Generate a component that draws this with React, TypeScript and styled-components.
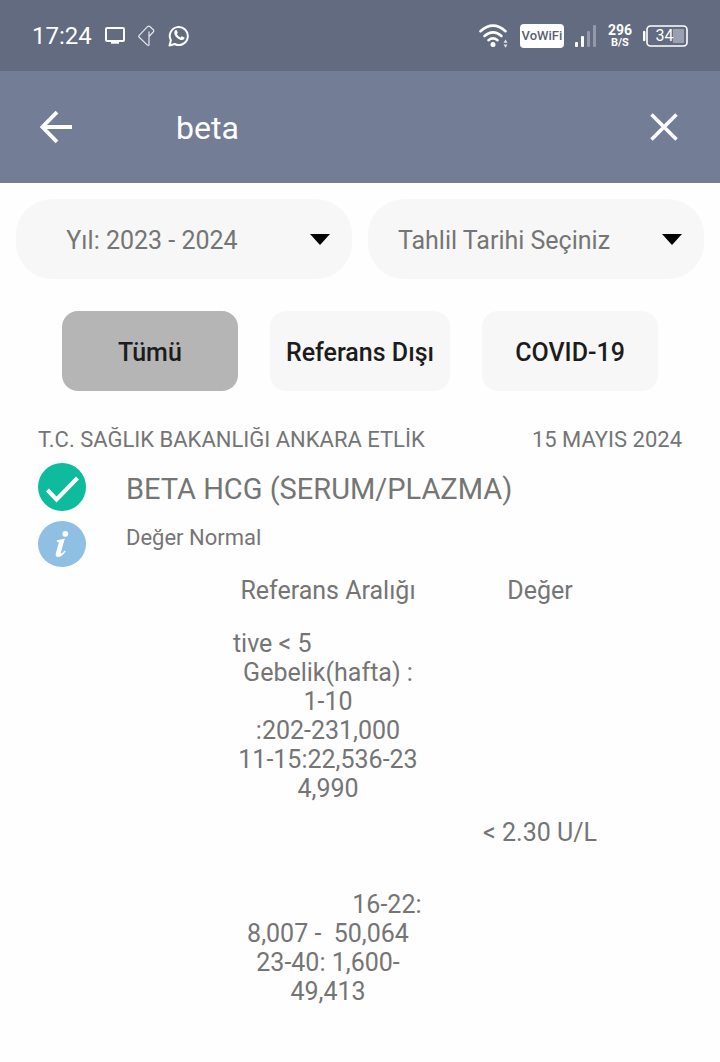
import React from 'react';
import styled, { createGlobalStyle } from 'styled-components';

const GlobalStyle = createGlobalStyle`
  *, *::before, *::after { box-sizing: border-box; }
  body {
    margin: 0;
    background: #fefefe;
    color: #757575;
    font-family: Roboto, "Liberation Sans", sans-serif;
  }
  button, input, select { font: inherit; }
`;

const StatusBar = styled.div`
  display: flex;
  align-items: center;
  justify-content: space-between;
  height: 71px;
  padding: 0 32px;
  background: #636b80;
  color: #ffffff;
`;

const StatusGroup = styled.div<{ $gap: number }>`
  display: flex;
  align-items: center;
  gap: ${(p) => p.$gap}px;
`;

const Clock = styled.span`
  font-size: 24px;
  line-height: 28px;
`;

const VoWifi = styled.span`
  width: 44px;
  height: 24px;
  border-radius: 4px;
  background: #ffffff;
  color: #5a6175;
  font-size: 13px;
  font-weight: 500;
  line-height: 24px;
  text-align: center;
`;

const Speed = styled.span`
  display: flex;
  flex-direction: column;
  align-items: center;
  font-size: 14px;
  font-weight: 700;
  line-height: 13px;

  small {
    font-size: 11px;
    line-height: 11px;
  }
`;

const Battery = styled.span`
  position: relative;
  display: flex;
  width: 45px;
  height: 22px;
`;

const BatteryLevel = styled.span`
  position: absolute;
  inset: 0 6px 0 4px;
  font-size: 16px;
  line-height: 22px;
  text-align: center;
`;

const SearchBar = styled.form`
  display: flex;
  align-items: center;
  height: 112px;
  padding: 0 32px;
  background: #737d96;
`;

const IconButton = styled.button`
  display: flex;
  align-items: center;
  justify-content: center;
  flex: none;
  width: 48px;
  height: 48px;
  padding: 0;
  border: 0;
  background: transparent;
  color: #ffffff;
`;

const SearchInput = styled.input`
  flex: 1;
  min-width: 0;
  height: 64px;
  margin-left: 96px;
  padding: 2px 0 0;
  border: 0;
  outline: 0;
  background: transparent;
  color: #ffffff;
  font-size: 32px;
`;

const Selects = styled.div`
  display: grid;
  grid-template-columns: 1fr 1fr;
  gap: 16px;
  padding: 16px;
`;

const SelectBox = styled.div`
  display: grid;
  grid-template-areas: "field";
  align-items: center;
  height: 80px;
  border-radius: 36px;
  background: #f7f7f7;

  svg {
    grid-area: field;
    justify-self: end;
    margin-right: 22px;
    pointer-events: none;
  }
`;

const Select = styled.select`
  grid-area: field;
  width: 100%;
  height: 80px;
  padding: 2px 64px 0 0;
  border: 0;
  border-radius: 36px;
  appearance: none;
  background: transparent;
  color: #757575;
  font-size: 25px;
  text-align: center;
  text-align-last: center;
`;

const Filters = styled.div`
  display: flex;
  justify-content: center;
  gap: 32px;
  padding: 16px;
`;

const FilterButton = styled.button<{ $active?: boolean }>`
  min-width: 176px;
  height: 80px;
  padding: 3px 16px 0;
  border: 0;
  border-radius: 16px;
  background: ${(p) => (p.$active ? '#b5b5b5' : '#f7f7f7')};
  color: #1c1c1c;
  font-size: 25px;
  font-weight: 500;
  white-space: nowrap;
`;

const Result = styled.article`
  padding: 20px 38px;
`;

const ResultMeta = styled.header`
  display: flex;
  justify-content: space-between;
  margin-bottom: 10px;
  font-size: 22px;
  line-height: 26px;
`;

const ResultRow = styled.div`
  display: flex;
  align-items: flex-start;
  gap: 40px;
  margin-bottom: 6px;

  svg { flex: none; }
`;

const ResultTitle = styled.h1`
  margin: 0;
  font-size: 29px;
  font-weight: 400;
  line-height: 52px;
`;

const ResultStatus = styled.p`
  margin: 0;
  font-size: 22px;
  line-height: 34px;
`;

const ValueTable = styled.table`
  width: 424px;
  margin: 7px auto 0 184px;
  border-collapse: collapse;
  table-layout: fixed;
  font-size: 25px;
  line-height: 29px;

  th, td {
    width: 50%;
    padding: 0;
    font-weight: 400;
    text-align: center;
    vertical-align: middle;
  }

  th { height: 55px; padding-bottom: 23px; }
`;

const RangeCell = styled.td`
  white-space: pre;
`;

const space = (count: number) => '\u00a0'.repeat(count);

const rangeLines = [
  'tive < 5' + space(18),
  'Gebelik(hafta) :',
  '1-10',
  ':202-231,000',
  '11-15:22,536-23',
  '4,990',
  space(1),
  space(1),
  space(1),
  space(19) + '16-22:',
  '8,007 -\u00a0 50,064',
  '23-40: 1,600-',
  '49,413',
  space(1),
];

const CastIcon = () => (
  <svg width="20" height="17" viewBox="0 0 20 17" fill="none" aria-hidden="true">
    <rect x="1" y="1" width="18" height="13" rx="1" stroke="#fff" strokeWidth="2" />
    <path d="M6 15.5h8" stroke="#fff" strokeWidth="2.4" />
  </svg>
);

const DiamondIcon = () => (
  <svg width="17" height="22" viewBox="0 0 17 22" fill="none" stroke="#e4e6ec" strokeWidth="1.2" strokeLinejoin="round" aria-hidden="true">
    <path d="M11 6.500V19.500q0 1.600-1.600.6L1.200 12.300q-.9-1 0-2L9.500 1.700q1.300-1.200 2.600 0l3.200 3q1 1.200 0 2.300L11 11.500" />
  </svg>
);

const WhatsAppIcon = () => (
  <svg width="22" height="23" viewBox="0 0 22 23" fill="none" aria-hidden="true">
    <path d="M1.500 21.500l1.400-5.200A9 9 0 1 1 6.700 20z" stroke="#fff" strokeWidth="2" strokeLinejoin="round" />
    <path d="M7.300 6.300c.6-.6 1.300-.5 1.600.2l.8 1.900c.1.400-.1.800-.8 1.600.9 1.700 2 2.700 3.700 3.400.9-1.200 1.200-1.300 1.700-1l1.800.9c.6.300.5 1.200 0 1.800-.9 1.100-2.400 1.300-4.100.6-2.700-1-4.400-2.900-5.400-5.200-.6-1.600-.3-3.200.7-4.200z" fill="#fff" />
  </svg>
);

const WifiIcon = () => (
  <svg width="30" height="24" viewBox="0 0 30 24" fill="none" aria-hidden="true">
    <g stroke="#fff" strokeWidth="2.600" strokeLinecap="round">
      <path d="M1.500 7.200Q14 -3.800 26.500 7.200" />
      <path d="M5.500 12Q14 4.700 22.500 12" />
      <path d="M9.500 16.200Q14 12.600 18.500 16.200" />
    </g>
    <circle cx="14" cy="20.500" r="2.500" fill="#fff" />
    <path d="M24.500 18.800l2-3.200 2 3.200zM24.500 20.600l2 3.200 2-3.200z" fill="#e1e3e9" />
  </svg>
);

const SignalIcon = () => (
  <svg width="22" height="22" viewBox="0 0 22 22" aria-hidden="true">
    <rect x="0" y="17" width="3" height="5" rx="1" fill="#fff" />
    <rect x="6" y="11" width="3" height="11" rx="1" fill="#fff" />
    <rect x="12" y="6" width="3" height="16" rx="1" fill="#9399aa" />
    <rect x="18" y="0" width="3" height="22" rx="1" fill="#9399aa" />
  </svg>
);

const BatteryIcon = () => (
  <svg width="45" height="22" viewBox="0 0 45 22" fill="none" aria-hidden="true">
    <rect x="30" y="4" width="11" height="14" fill="#9a9fb2" />
    <rect x="4" y="1" width="40" height="20" rx="3.500" stroke="#fff" strokeWidth="1.600" />
    <path d="M1.200 7v8" stroke="#fff" strokeWidth="2.400" strokeLinecap="round" />
  </svg>
);

const BackIcon = () => (
  <svg width="34" height="34" viewBox="0 0 34 34" fill="none" stroke="#fff" strokeWidth="3.800" aria-hidden="true">
    <path d="M18 2.200L3.400 17 18 31.800M3 17h30" />
  </svg>
);

const CloseIcon = () => (
  <svg width="28" height="28" viewBox="0 0 28 28" fill="none" stroke="#fff" strokeWidth="3.600" aria-hidden="true">
    <path d="M1.500 1.500l25 25M26.500 1.500l-25 25" />
  </svg>
);

const CaretIcon = () => (
  <svg width="20" height="11" viewBox="0 0 20 11" aria-hidden="true">
    <path d="M0 0h20L10 11z" fill="#000" />
  </svg>
);

const CheckIcon = () => (
  <svg width="48" height="48" viewBox="0 0 48 48" fill="none" aria-hidden="true">
    <circle cx="24" cy="24" r="24" fill="#0ebb9c" />
    <path d="M9.500 27l9 9.500L39.500 15" stroke="#fff" strokeWidth="4" />
  </svg>
);

const InfoIcon = () => (
  <svg width="48" height="46" viewBox="0 0 48 46" aria-hidden="true">
    <ellipse cx="24" cy="23" rx="24" ry="23" fill="#8fbfe2" />
    <circle cx="27.300" cy="12.800" r="2.900" fill="#fff" />
    <path d="M18.800 19.200c2.800-.3 5.200-.9 8-1.700l-3.900 13.700c-.3 1.300.6 1.500 1.400.8l2.400-2.500.9.700c-2 3.200-4.400 5.700-7.200 5.700-2.400 0-3.200-1.500-2.500-4l2.700-9.400c.3-1.200-.2-1.700-1.800-1.800z" fill="#fff" />
  </svg>
);

export default function App() {
  return (
    <>
      <GlobalStyle />
      <StatusBar>
        <StatusGroup $gap={13}>
          <Clock>17:24</Clock>
          <CastIcon />
          <DiamondIcon />
          <WhatsAppIcon />
        </StatusGroup>
        <StatusGroup $gap={11}>
          <WifiIcon />
          <VoWifi>VoWiFi</VoWifi>
          <SignalIcon />
          <Speed>
            <span>296</span>
            <small>B/S</small>
          </Speed>
          <Battery>
            <BatteryIcon />
            <BatteryLevel>34</BatteryLevel>
          </Battery>
        </StatusGroup>
      </StatusBar>
      <SearchBar onSubmit={(e) => e.preventDefault()}>
        <IconButton type="button" aria-label="Geri">
          <BackIcon />
        </IconButton>
        <SearchInput type="text" aria-label="Ara" defaultValue="beta" />
        <IconButton type="reset" aria-label="Temizle">
          <CloseIcon />
        </IconButton>
      </SearchBar>
      <main>
        <Selects>
          <SelectBox>
            <Select aria-label="Yıl">
              <option>Yıl: 2023 - 2024</option>
            </Select>
            <CaretIcon />
          </SelectBox>
          <SelectBox>
            <Select aria-label="Tahlil tarihi">
              <option>Tahlil Tarihi Seçiniz</option>
            </Select>
            <CaretIcon />
          </SelectBox>
        </Selects>
        <Filters>
          <FilterButton type="button" aria-pressed="true" $active>
            Tümü
          </FilterButton>
          <FilterButton type="button">Referans Dışı</FilterButton>
          <FilterButton type="button">COVID-19</FilterButton>
        </Filters>
        <Result>
          <ResultMeta>
            <span>T.C. SAĞLIK BAKANLIĞI ANKARA ETLİK</span>
            <time dateTime="2024-05-15">15 MAYIS 2024</time>
          </ResultMeta>
          <ResultRow>
            <CheckIcon />
            <ResultTitle>BETA HCG (SERUM/PLAZMA)</ResultTitle>
          </ResultRow>
          <ResultRow>
            <InfoIcon />
            <ResultStatus>Değer Normal</ResultStatus>
          </ResultRow>
          <ValueTable>
            <thead>
              <tr>
                <th scope="col">Referans Aralığı</th>
                <th scope="col">Değer</th>
              </tr>
            </thead>
            <tbody>
              <tr>
                <RangeCell>{rangeLines.join('\n')}</RangeCell>
                <td>&lt; 2.30 U/L</td>
              </tr>
            </tbody>
          </ValueTable>
        </Result>
      </main>
    </>
  );
}
